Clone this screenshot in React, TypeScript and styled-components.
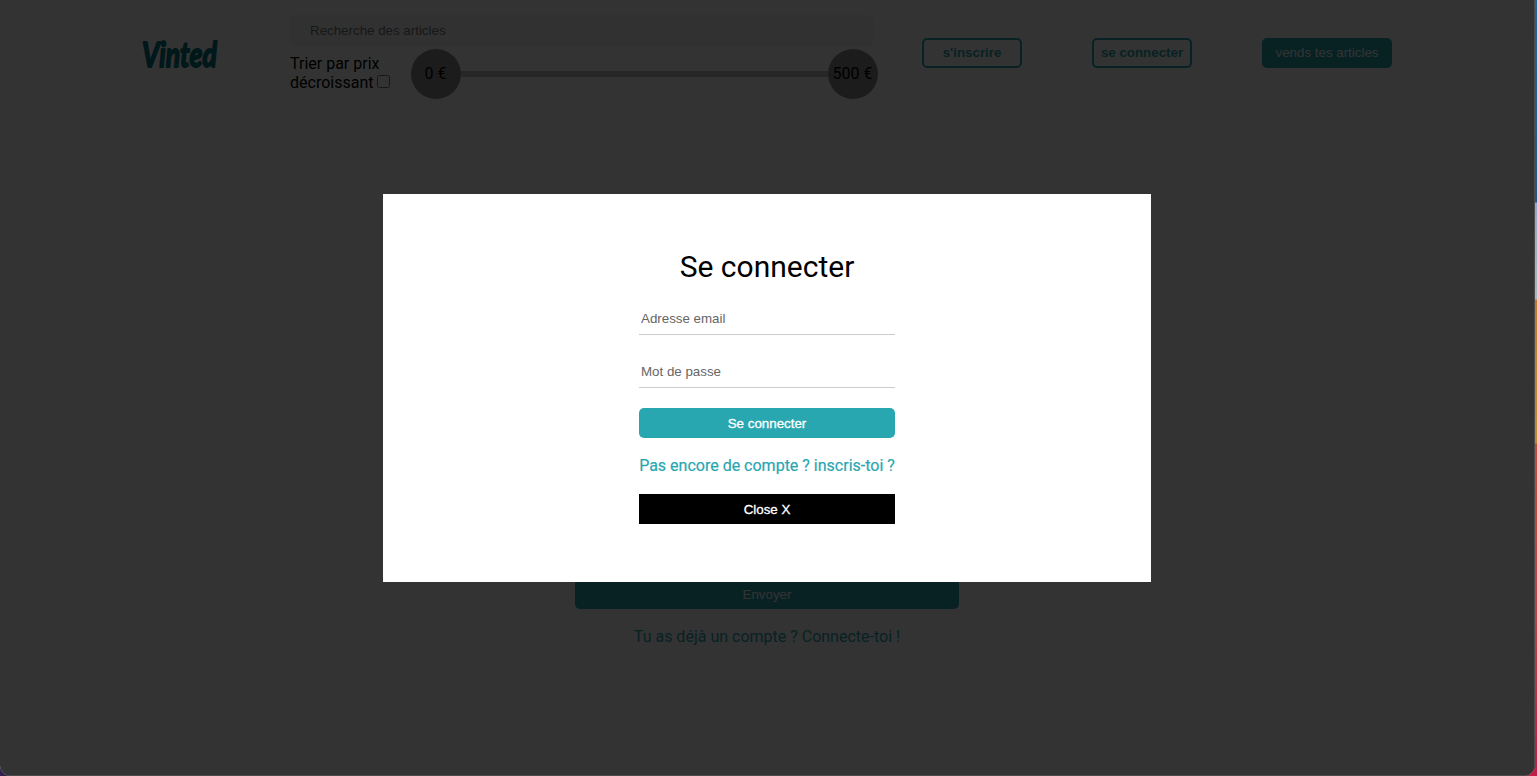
import React from "react";
import styled, { createGlobalStyle } from "styled-components";

const teal = "#29a7b1";
const arial = '"Liberation Sans", Arial, sans-serif';

const GlobalStyle = createGlobalStyle`
  * { box-sizing: border-box; }
  body { margin: 0; font-family: Roboto, sans-serif; font-size: 16px; overflow: hidden; }
  button, input { font-family: ${arial}; font-size: 13.333px; }
`;

const Desktop = styled.div`
  height: 776px;
  display: grid;
  grid-template-columns: minmax(0, 1fr);
  padding-right: 2px;
  background:
    linear-gradient(90deg, #32204f 0, #32204f 12px, #444 22px, #444 1515px, #c31e49 1526px) bottom / 100% 12px no-repeat,
    linear-gradient(180deg, #1f6597 0, #205780 202px, #96a6c8 203px, #a6b7bd 299px, #c1782d 300px, #bd8b30 443px, #bd4d37 444px, #b8423e 620px, #c41746 776px);
`;

const Browser = styled.div`
  position: relative;
  background: #fff;
  border-radius: 0 0 11px 11px;
  overflow: hidden;
`;

const Header = styled.header`
  display: flex;
  height: 106px;
  padding-left: 141px;
`;

const Logo = styled.svg`
  width: 80px;
  height: 50px;
  margin: 27px 69px 0 0;
  flex: none;
  overflow: visible;
`;

const Search = styled.div`
  width: 588px;
  padding-top: 15px;
  flex: none;
`;

const SearchInput = styled.input`
  display: block;
  width: 584px;
  height: 31px;
  padding: 0 20px;
  border: 0;
  border-radius: 5px;
  background: #f5f5f5;
`;

const Filters = styled.div`
  display: flex;
  align-items: center;
  margin-top: 3px;
`;

const SortLabel = styled.label`
  width: 121px;
  line-height: 19px;
  padding-bottom: 2px;
  white-space: nowrap;
`;

const Checkbox = styled.input`
  width: 13px;
  height: 13px;
  margin: 0 0 0 4px;
  vertical-align: 0;
`;

const Range = styled.div`
  display: flex;
  align-items: center;
  width: 467px;
`;

const Thumb = styled.div`
  display: flex;
  align-items: center;
  justify-content: center;
  flex: none;
  width: 50px;
  height: 50px;
  padding: 0 1px 2px 0;
  border-radius: 50%;
  background: #8c8c8c;
  white-space: nowrap;
`;

const Track = styled.div`
  flex: 1;
  height: 6px;
  background: #c4c4c4;
`;

const Nav = styled.nav`
  display: flex;
  gap: 70px;
  padding: 38px 0 0 44px;
`;

const NavButton = styled.button<{ $filled?: boolean }>`
  width: ${(p) => (p.$filled ? 130 : 100)}px;
  height: 30px;
  padding: 0 0 2px;
  border: 2px solid ${teal};
  border-radius: 5px;
  background: ${(p) => (p.$filled ? teal : "#fff")};
  color: ${(p) => (p.$filled ? "#fff" : teal)};
  font-weight: ${(p) => (p.$filled ? 400 : 700)};
`;

const SignupForm = styled.form`
  display: flex;
  flex-direction: column;
  align-items: center;
  padding: 473px 1px 0 0;
`;

const SubmitButton = styled.button`
  width: 384px;
  height: 30px;
  border: 0;
  border-radius: 5px;
  background: ${teal};
  color: #fff;
`;

const TextLink = styled.a`
  color: ${teal};
  line-height: 19px;
  white-space: nowrap;
`;

const SignupLink = styled(TextLink)`
  margin-top: 18px;
`;

const Overlay = styled.div`
  position: absolute;
  inset: 0;
  display: flex;
  align-items: flex-start;
  justify-content: center;
  padding-top: 194px;
  background: rgba(0, 0, 0, 0.8);
  border-right: 1px solid #4c4c4c;
  border-bottom: 1px solid #4c4c4c;
`;

const Modal = styled.div`
  width: 768px;
  height: 388px;
  padding-top: 55px;
  display: flex;
  flex-direction: column;
  align-items: center;
  background: #fff;
`;

const Title = styled.h1`
  margin: 0 0 18px;
  font-size: 30px;
  font-weight: 400;
  line-height: 35px;
`;

const Field = styled.input`
  width: 256px;
  height: 33px;
  margin-bottom: 20px;
  padding: 1px 2px;
  border: 0;
  border-bottom: 1px solid #ccc;
  &::placeholder { color: #666; }
`;

const ModalButton = styled.button<{ $close?: boolean }>`
  width: 256px;
  height: 30px;
  border: 0;
  border-radius: ${(p) => (p.$close ? 0 : 5)}px;
  background: ${(p) => (p.$close ? "#000" : teal)};
  color: #fff;
  -webkit-text-stroke: 0.3px #fff;
`;

const ModalLink = styled(TextLink)`
  margin: 18px 0 19px;
  -webkit-text-stroke: 0.2px ${teal};
`;

export default function App() {
  return (
    <Desktop>
      <GlobalStyle />
      <Browser>
        <Header>
          <Logo viewBox="0 0 80 50" role="img" aria-label="Vinted">
            <text
              x="1"
              y="40"
              textLength="75"
              lengthAdjust="spacingAndGlyphs"
              fill="#007782"
              stroke="#007782"
              strokeWidth="1.8"
              strokeLinejoin="round"
              fontFamily="Lato, sans-serif"
              fontWeight="700"
              fontStyle="italic"
              fontSize="35"
            >
              Vinted
            </text>
          </Logo>
          <Search>
            <SearchInput placeholder="Recherche des articles" />
            <Filters>
              <SortLabel>
                Trier par prix
                <br />
                décroissant
                <Checkbox type="checkbox" />
              </SortLabel>
              <Range>
                <Thumb>0 €</Thumb>
                <Track />
                <Thumb>500 €</Thumb>
              </Range>
            </Filters>
          </Search>
          <Nav>
            <NavButton>s'inscrire</NavButton>
            <NavButton>se connecter</NavButton>
            <NavButton $filled>vends tes articles</NavButton>
          </Nav>
        </Header>
        <SignupForm>
          <SubmitButton type="button">Envoyer</SubmitButton>
          <SignupLink>Tu as déjà un compte ? Connecte-toi !</SignupLink>
        </SignupForm>
        <Overlay>
          <Modal>
            <Title>Se connecter</Title>
            <Field placeholder="Adresse email" />
            <Field placeholder="Mot de passe" />
            <ModalButton>Se connecter</ModalButton>
            <ModalLink>Pas encore de compte ? inscris-toi ?</ModalLink>
            <ModalButton $close>Close X</ModalButton>
          </Modal>
        </Overlay>
      </Browser>
    </Desktop>
  );
}
